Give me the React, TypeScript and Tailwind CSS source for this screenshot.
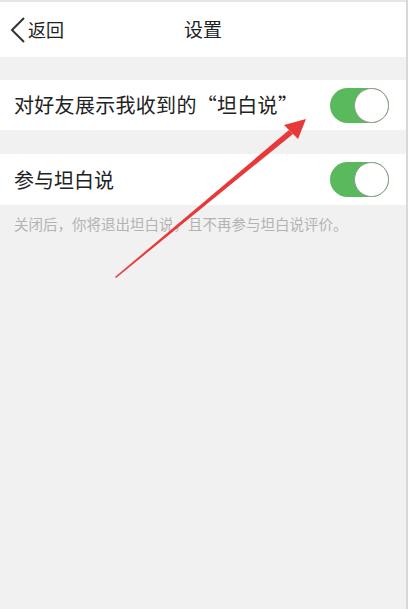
const Toggle = () => (
  <div className="w-[59px] h-[35px] rounded-full bg-[#5bb95d] flex justify-end">
    <div className="w-[35px] h-[35px] rounded-full bg-white border-[1.5px] border-[#8e9a8e]" />
  </div>
);

export default function App() {
  return (
    <div
      className="relative w-[408px] h-[609px] bg-[#f1f1f1] overflow-hidden border-r-2 border-[#d8d8d8]"
      style={{ fontFamily: '"Noto Sans CJK SC", "Noto Sans", sans-serif' }}
    >
      {/* Nav bar */}
      <div className="h-[57px] bg-white border-t-2 border-[#e6e6e6] flex items-center relative">
        <div className="flex items-center pl-[10px] text-[#222]">
          <svg width="16" height="26" viewBox="0 0 16 26" className="mt-[1px]">
            <polyline points="14,1 2,13 14,25" fill="none" stroke="#333" strokeWidth="2" strokeLinejoin="miter" />
          </svg>
          <span className="text-[18px] ml-[2px]">返回</span>
        </div>
        <div className="absolute inset-x-0 text-center text-[19px] text-[#222] pointer-events-none">设置</div>
      </div>

      <div className="h-[23px]" />

      {/* Row 1 */}
      <div className="h-[50px] bg-white flex items-center justify-between pl-[14px] pr-[17px]">
        <span className="text-[20px] text-[#222] tracking-[0.3px]">对好友展示我收到的“坦白说”</span>
        <Toggle />
      </div>

      <div className="h-[24px]" />

      {/* Row 2 */}
      <div className="h-[51px] bg-white flex items-center justify-between pl-[14px] pr-[17px]">
        <span className="text-[20px] text-[#222]">参与坦白说</span>
        <Toggle />
      </div>

      <p className="pl-[14px] pt-[8px] text-[14.5px] text-[#b3b3b3]">
        关闭后，你将退出坦白说，且不再参与坦白说评价。
      </p>

      {/* Annotation arrow */}
      <svg className="absolute left-0 top-0" width="408" height="609" viewBox="0 0 408 609">
        <polygon points="115,277 116,278 293,134 289,130" fill="#e8393a" />
        <polygon points="306,119 284,125 298,139" fill="#e8393a" />
      </svg>
    </div>
  );
}
